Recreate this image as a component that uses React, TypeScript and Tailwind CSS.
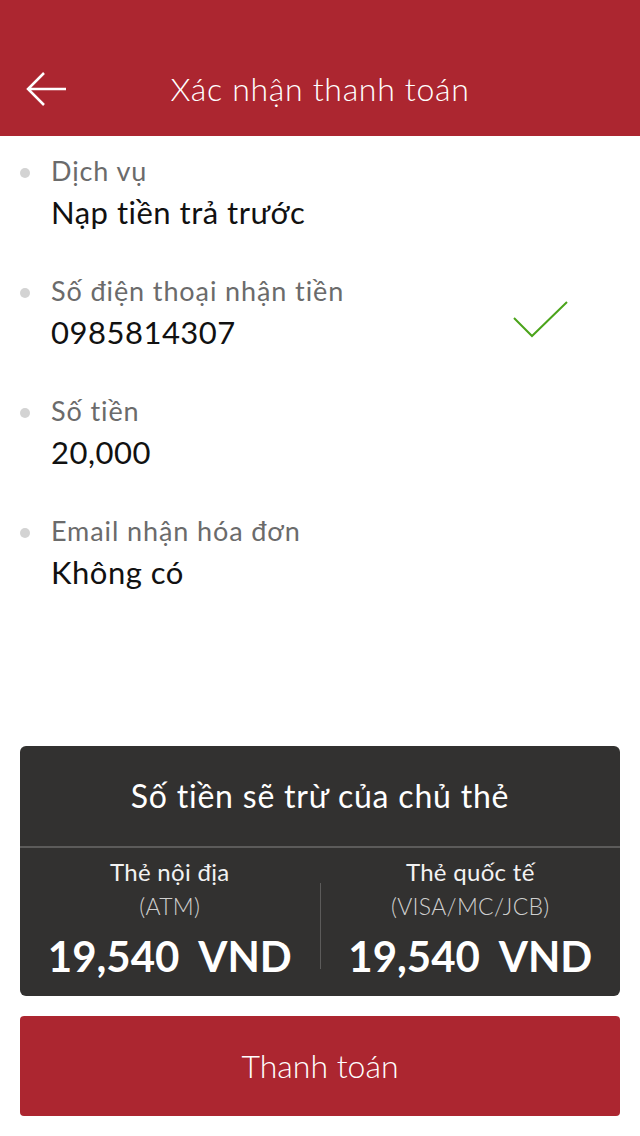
const font = { fontFamily: '"Lato", "Open Sans", sans-serif' };

const rows = [
  { label: "Dịch vụ", value: "Nạp tiền trả trước", check: false },
  { label: "Số điện thoại nhận tiền", value: "0985814307", check: true },
  { label: "Số tiền", value: "20,000", check: false },
  { label: "Email nhận hóa đơn", value: "Không có", check: false },
];

function Amount({ title, sub }: { title: string; sub: string }) {
  return (
    <div className="flex-1 flex flex-col items-center">
      <div className="text-[24px] leading-[30px] tracking-[0.3px] text-[#f2f2f2]">{title}</div>
      <div className="text-[23px] leading-[30px] font-light tracking-[0.3px] text-[#cfcfcf] mt-[4px]">{sub}</div>
      <div className="text-[42px] leading-[50px] font-bold text-white mt-[10px] whitespace-pre">19,540  VND</div>
    </div>
  );
}

export default function App() {
  return (
    <div className="w-[640px] h-[1136px] bg-white flex flex-col" style={font}>
      {/* Header */}
      <div className="h-[136px] bg-[#ac2630] flex items-end pb-[24px] shrink-0">
        <div className="relative w-full flex justify-center items-center h-[46px]">
          <svg className="absolute left-[24px] top-[3px]" width="46" height="40" viewBox="0 0 46 40" fill="none">
            <path d="M20 4 L4 20 L20 36 M4 20 H42" stroke="white" strokeWidth="2.5" />
          </svg>
          <h1 className="text-[32px] font-light text-white tracking-[0.7px]">Xác nhận thanh toán</h1>
        </div>
      </div>

      {/* Details */}
      <div className="flex flex-col pt-[18px] pl-[20px] pr-[20px]">
        {rows.map((r) => (
          <div key={r.label} className="flex h-[120px]">
            <div className="w-[31px] pt-[14px]">
              <div className="w-[10px] h-[10px] rounded-full bg-[#d3d3d3]" />
            </div>
            <div className="flex-1 flex flex-col">
              <div className="text-[27px] leading-[34px] tracking-[0.9px] text-[#6b6b6b]">{r.label}</div>
              <div className="text-[31px] leading-[40px] tracking-[0.5px] text-[#111111] mt-[4px]">{r.value}</div>
            </div>
            {r.check && (
              <svg className="mt-[26px] mr-[50px]" width="58" height="40" viewBox="0 0 58 40" fill="none">
                <path d="M2 18 L20 36 L55 2" stroke="#4ba41b" strokeWidth="2" />
              </svg>
            )}
          </div>
        ))}
      </div>

      <div className="flex-1" />

      {/* Summary card */}
      <div className="mx-[20px] bg-[#323130] rounded-[6px] h-[250px] flex flex-col shrink-0">
        <div className="h-[102px] flex items-center justify-center border-b-2 border-[#5c5b5a]">
          <div className="text-[32px] tracking-[0.8px] text-white">Số tiền sẽ trừ của chủ thẻ</div>
        </div>
        <div className="flex-1 flex items-center pb-[6px]">
          <Amount title="Thẻ nội địa" sub="(ATM)" />
          <div className="w-px h-[86px] bg-[#5c5b5a] mt-[14px]" />
          <Amount title="Thẻ quốc tế" sub="(VISA/MC/JCB)" />
        </div>
      </div>

      {/* Button */}
      <button className="mx-[20px] mt-[20px] mb-[20px] h-[100px] bg-[#ac2630] rounded-[4px] text-white text-[32px] font-light shrink-0">
        Thanh toán
      </button>
    </div>
  );
}
